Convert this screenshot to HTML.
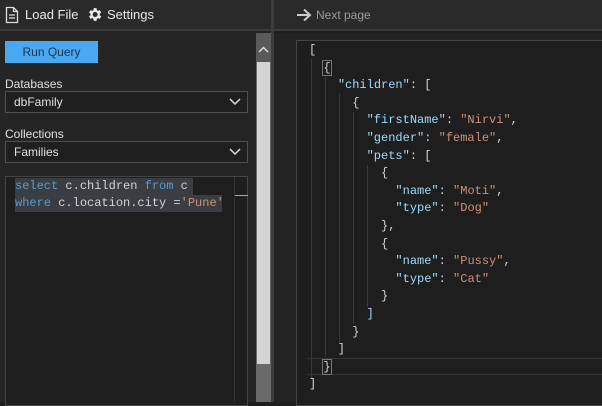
<!DOCTYPE html>
<html><head><meta charset="utf-8"><style>
*{margin:0;padding:0;box-sizing:border-box}
body{width:602px;height:402px;overflow:hidden;background:#1e1e1e;font-family:"Liberation Sans",sans-serif;color:#ddd;position:relative}
.abs{position:absolute}
.mono{font-family:"Liberation Mono",monospace;font-size:12px;white-space:pre}
.k{color:#9cdcfe}.s{color:#ce9178}.p{color:#d4d4d4}.kw{color:#569cd6}
.sel{background:#3a3d41}
</style></head><body>
<!-- left panel -->
<div class="abs" style="left:0;top:0;width:271px;height:402px;background:#252526"></div>
<div class="abs" style="left:0;top:0;width:271px;height:31px;background:#2a2a2a;border-bottom:2px solid #3a3a3a"></div>
<!-- toolbar icons -->
<svg class="abs" style="left:5px;top:6px" width="14" height="18" viewBox="0 0 14 18"><path d="M1.5 1.5h7l4 4v11h-11z M8.5 1.5v4h4 M4 9h6 M4 12h6" fill="none" stroke="#ddd" stroke-width="1.3"/></svg>
<div class="abs" style="left:25px;top:7px;font-size:13px;color:#e8e8e8">Load File</div>
<svg class="abs" style="left:86px;top:6px" width="17" height="17" viewBox="0 0 24 24"><path fill="#e8e8e8" d="M19.4 13a7.5 7.5 0 0 0 0-2l2.1-1.6-2-3.5-2.5 1a7 7 0 0 0-1.7-1L14.9 3h-4l-.4 2.9a7 7 0 0 0-1.7 1l-2.5-1-2 3.5L6.4 11a7.5 7.5 0 0 0 0 2l-2.1 1.6 2 3.5 2.5-1a7 7 0 0 0 1.7 1l.4 2.9h4l.4-2.9a7 7 0 0 0 1.7-1l2.5 1 2-3.5zM12.9 15.5a3.5 3.5 0 1 1 0-7 3.5 3.5 0 0 1 0 7z"/></svg>
<div class="abs" style="left:107px;top:7px;font-size:13px;color:#e8e8e8">Settings</div>
<div class="abs" style="left:5px;top:41px;width:93px;height:22px;background:#4aa8f0;color:#1a3550;font-size:12px;text-align:center;line-height:22px">Run Query</div>
<div class="abs" style="left:5px;top:77px;font-size:12px;color:#e0e0e0">Databases</div>
<div class="abs" style="left:5px;top:91px;width:243px;height:22px;border:1px solid #505050;background:#1f1f1f;font-size:12px;color:#e0e0e0;padding:3px 0 0 8px">dbFamily</div>
<svg class="abs" style="left:229px;top:98px" width="12" height="8"><path d="M1 1l5 5 5-5" fill="none" stroke="#ddd" stroke-width="1.5"/></svg>
<div class="abs" style="left:5px;top:127px;font-size:12px;color:#e0e0e0">Collections</div>
<div class="abs" style="left:5px;top:141px;width:243px;height:22px;border:1px solid #505050;background:#1f1f1f;font-size:12px;color:#e0e0e0;padding:3px 0 0 8px">Families</div>
<svg class="abs" style="left:229px;top:148px" width="12" height="8"><path d="M1 1l5 5 5-5" fill="none" stroke="#ddd" stroke-width="1.5"/></svg>
<!-- query editor -->
<div class="abs" style="left:5px;top:176px;width:243px;height:230px;border:1px solid #444;background:#1e1e1e"></div>
<div class="abs" style="left:234px;top:177px;width:1px;height:225px;background:#333"></div>
<div class="abs" style="left:235px;top:195px;width:13px;height:1px;background:#aaa"></div>
<div class="abs mono sel" style="left:15px;top:178px;height:17px;line-height:17px;width:178px"><span class="kw">select</span><span class="p"> c.children </span><span class="kw">from</span><span class="p"> c</span></div>
<div class="abs mono sel" style="left:15px;top:195px;height:17px;line-height:17px;width:207px"><span class="kw">where</span><span class="p"> c.location.city =</span><span class="s">'Pune'</span></div>
<!-- scrollbar -->
<div class="abs" style="left:256px;top:33px;width:15px;height:369px;background:#6a6a6a"></div>
<div class="abs" style="left:256px;top:33px;width:15px;height:29px;background:#5a5a5a"></div>
<svg class="abs" style="left:258px;top:46px" width="11" height="7"><path d="M1 6l4.5-4.5L10 6" fill="none" stroke="#ddd" stroke-width="1.5"/></svg>
<div class="abs" style="left:257px;top:62px;width:13px;height:302px;background:#d4d4d4"></div>
<div class="abs" style="left:271px;top:0;width:3px;height:402px;background:#3c3c3c"></div>
<!-- right panel -->
<div class="abs" style="left:274px;top:0;width:328px;height:31px;background:#2a2a2a;border-bottom:2px solid #3a3a3a"></div>
<svg class="abs" style="left:296px;top:8px" width="16" height="14"><path d="M1 7h13M8 1.5l6 5.5-6 5.5" fill="none" stroke="#ccc" stroke-width="2"/></svg>
<div class="abs" style="left:316px;top:8px;font-size:12px;color:#9a9a9a">Next page</div>
<div class="abs" style="left:274px;top:33px;width:328px;height:369px;background:#232323"></div>
<div class="abs" style="left:296px;top:40px;width:310px;height:366px;border:1px solid #444;background:#1e1e1e"></div>
<!-- indent guides -->
<div class="abs" style="left:311px;top:59px;width:1px;height:320px;background:#3a3a3a"></div>
<div class="abs" style="left:325px;top:77px;width:1px;height:280px;background:#3a3a3a"></div>
<div class="abs" style="left:339px;top:94px;width:1px;height:248px;background:#3a3a3a"></div>
<div class="abs" style="left:353px;top:112px;width:1px;height:212px;background:#3a3a3a"></div>
<div class="abs" style="left:367px;top:165px;width:1px;height:142px;background:#3a3a3a"></div>
<!-- current line -->
<div class="abs" style="left:307px;top:358px;width:295px;height:17px;border-top:1px solid #333;border-bottom:1px solid #333"></div>
<div class="abs mono" style="left:309px;top:42px;line-height:17.6px"><span class="p">[</span>
<span class="p">  <span style="outline:1px solid #777">{</span></span>
    <span class="k">"children"</span><span class="p">: [</span>
<span class="p">      {</span>
        <span class="k">"firstName"</span><span class="p">: </span><span class="s">"Nirvi"</span><span class="p">,</span>
        <span class="k">"gender"</span><span class="p">: </span><span class="s">"female"</span><span class="p">,</span>
        <span class="k">"pets"</span><span class="p">: [</span>
<span class="p">          {</span>
            <span class="k">"name"</span><span class="p">: </span><span class="s">"Moti"</span><span class="p">,</span>
            <span class="k">"type"</span><span class="p">: </span><span class="s">"Dog"</span>
<span class="p">          },</span>
<span class="p">          {</span>
            <span class="k">"name"</span><span class="p">: </span><span class="s">"Pussy"</span><span class="p">,</span>
            <span class="k">"type"</span><span class="p">: </span><span class="s">"Cat"</span>
<span class="p">          }</span>
<span class="k">        ]</span>
<span class="p">      }</span>
<span class="p">    ]</span>
<span class="p">  <span style="outline:1px solid #777">}</span></span>
<span class="p">]</span></div>
</body></html>
